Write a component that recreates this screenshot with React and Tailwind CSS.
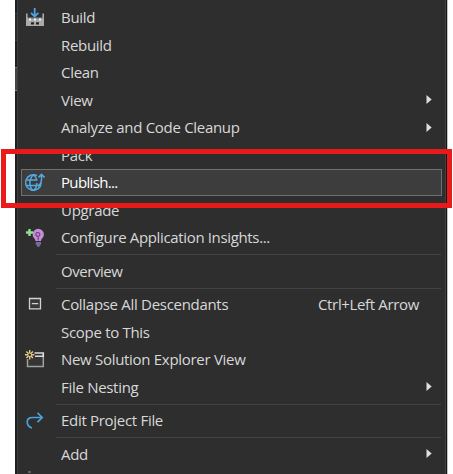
import React from 'react';

function BuildIcon() {
  return (
    <svg width="20" height="20" viewBox="0 0 20 20" fill="none">
      <path d="M1 5.500v12.500h18V5.500h-1.600v4.200H2.600V5.500z" fill="#aaa" />
      <path d="M2.600 9.500h14.800v1H2.600z" fill="#6c6c6c" />
      <path d="M4 10.500h2v2H4zM9 10.500h2v2H9zM14 10.500h2v2h-2z" fill="#f4f4f4" />
      <path d="M6 14.300h3v2.200H6zM11 14.300h3v2.200h-3z" fill="#242424" />
      <path d="M9.700 0v8.500M6 4.800l3.700 3.700 3.700-3.700" stroke="#4da3df" strokeWidth="1.800" />
    </svg>
  );
}

function GlobeIcon() {
  return (
    <svg width="20" height="20" viewBox="0 0 20 20" fill="none" stroke="#55a9e2" strokeWidth="1.500">
      <path d="M12 2.600A7.800 7.800 0 1 0 16.200 10" />
      <path d="M8.300 2c-4.600 4.200-4.600 11.600 0 15.600M8.800 2c1.700 1.500 2.600 3.300 2.900 5.200M8.800 17.600c2-2 3.100-4.600 3-7.600M1.500 7h11M1.500 12.500h13.800" />
      <path d="M13 13c2.700-1.600 3.500-3.800 3.500-7V1.700M13.500 4.400l3-3 3 3" />
    </svg>
  );
}

function InsightsIcon() {
  return (
    <svg width="20" height="20" viewBox="0 0 20 20" fill="none">
      <path d="M13.200 .8a5.700 5.700 0 0 1 5.700 5.700c0 3-2.600 4-2.900 6.400h-5.500c-.3-2.400-2.900-3.400-2.900-6.400a5.700 5.700 0 0 1 5.600-5.700z" fill="#c58dd7" />
      <path d="M13.200 12.500V8.200M13.200 8.200c-3 .4-3-3.700-.6-3.700 2.600 0 3.300 3.100.6 3.700z" stroke="#674270" strokeWidth="1.100" />
      <path d="M10.700 14H16v2.700h-1.200v2h-3v-2h-1.100z" fill="#756c9d" />
      <path d="M4.500 1v7M1 4.500h7" stroke="#2e2e2e" strokeWidth="4" />
      <path d="M4.500 1v7M1 4.500h7" stroke="#8ee08e" strokeWidth="2.400" />
    </svg>
  );
}

function CollapseIcon() {
  return (
    <svg width="20" height="20" viewBox="0 0 20 20" fill="none" stroke="#d2d2d2" strokeWidth="1.300">
      <path d="M4.500 3.500h11v10.300h-11z" fill="#383838" />
      <path d="M6.800 8.600h6.400" />
    </svg>
  );
}

function NewViewIcon() {
  return (
    <svg width="20" height="20" viewBox="0 0 20 20" fill="none">
      <path d="M2.500 9v7.500h15.800V3.500" fill="#353535" stroke="#a0a0a0" strokeWidth="1.500" />
      <path d="M9.500 3h8.800v3.300H10" stroke="#dcdcdc" strokeWidth="1.500" />
      <path d="M4.700 0v9.400M0 4.700h9.400M1.400 1.400l6.600 6.600M8 1.400L1.400 8" stroke="#e6c982" strokeWidth="1.400" />
      <circle cx="4.700" cy="4.700" r="1.300" fill="#2e2e2e" />
    </svg>
  );
}

function RedoIcon() {
  return (
    <svg width="20" height="20" viewBox="0 0 20 20" fill="none" stroke="#4ba1da" strokeWidth="1.700">
      <path d="M7 17C.8 15 .3 6.500 7.500 6.500h9.500M12.500 1.800L17.200 6.500l-4.700 4.700" />
    </svg>
  );
}

function Item({ icon, label, track = 'tracking-[-0.3px]', arrow, shortcut, active }) {
  return (
    <div className="relative flex h-[27.5px] shrink-0 items-center pl-[7px] pr-[13px]">
      {active && <div className="absolute left-[3px] right-[3px] top-0 h-[27px] border border-[#707070] bg-[#3d3d3d]" />}
      <div className="relative h-5 w-5 shrink-0">{icon}</div>
      <span className={`relative mb-[1.5px] ml-4 whitespace-nowrap ${track} ${active ? 'text-white' : 'text-[#d8d8d8]'}`}>{label}</span>
      {shortcut && <span className="mb-[1.5px] ml-auto mr-[13px] whitespace-nowrap tracking-[-0.35px]">{shortcut}</span>}
      {arrow && (
        <svg className="mb-px ml-auto" width="6" height="9" viewBox="0 0 6 9">
          <path d="M.5 0v9L5.700 4.500z" fill="#dedede" />
        </svg>
      )}
    </div>
  );
}

function Separator() {
  return (
    <div className="flex h-[6px] shrink-0 items-center pl-[38px] pr-1">
      <div className="h-px w-full bg-[#424242]" />
    </div>
  );
}

export default function App() {
  return (
    <div className="relative flex h-[474px] w-[453px] overflow-hidden bg-white pl-[15px] font-['Open_Sans','Noto_Sans',sans-serif] text-[15px] leading-5 text-[#d8d8d8]">
      <div className="flex w-[2px] shrink-0 flex-col bg-[#1c1e20]">
        <div className="mt-[13px] h-7 border-y border-[#393b3d] bg-[#27292b]" />
        <div className="mt-[26px] h-6 border-y border-[#777] bg-[#424446]" />
      </div>
      <div className="flex w-[429px] shrink-0 flex-col border-x border-l-[#3d3f40] border-r-[#414141] bg-[#2e2e2e] pt-1">
        <Item icon={<BuildIcon />} label="Build" />
        <Item label="Rebuild" />
        <Item label="Clean" />
        <Item label="View" arrow />
        <Item label="Analyze and Code Cleanup" arrow />
        <Item label="Pack" />
        <Item icon={<GlobeIcon />} label="Publish..." track="tracking-[-0.65px]" active />
        <Item label="Upgrade" />
        <Item icon={<InsightsIcon />} label="Configure Application Insights..." track="tracking-[-0.35px]" />
        <Separator />
        <Item label="Overview" track="tracking-[-0.45px]" />
        <Separator />
        <Item icon={<CollapseIcon />} label="Collapse All Descendants" shortcut="Ctrl+Left Arrow" />
        <Item label="Scope to This" />
        <Item icon={<NewViewIcon />} label="New Solution Explorer View" />
        <Item label="File Nesting" arrow />
        <Separator />
        <Item icon={<RedoIcon />} label="Edit Project File" />
        <Separator />
        <Item label="Add" arrow />
        <div className="mt-[3px] ml-[10px] h-[2px] w-[3px] bg-[#5a6268]" />
      </div>
      <div className="w-px shrink-0 bg-[#141414]" />
      <div className="w-px shrink-0 bg-[#c4c4c4]" />
      <div className="absolute left-[1px] top-[149px] h-[59px] w-[451px] border-[5px] border-[#e81a1a]" />
    </div>
  );
}
